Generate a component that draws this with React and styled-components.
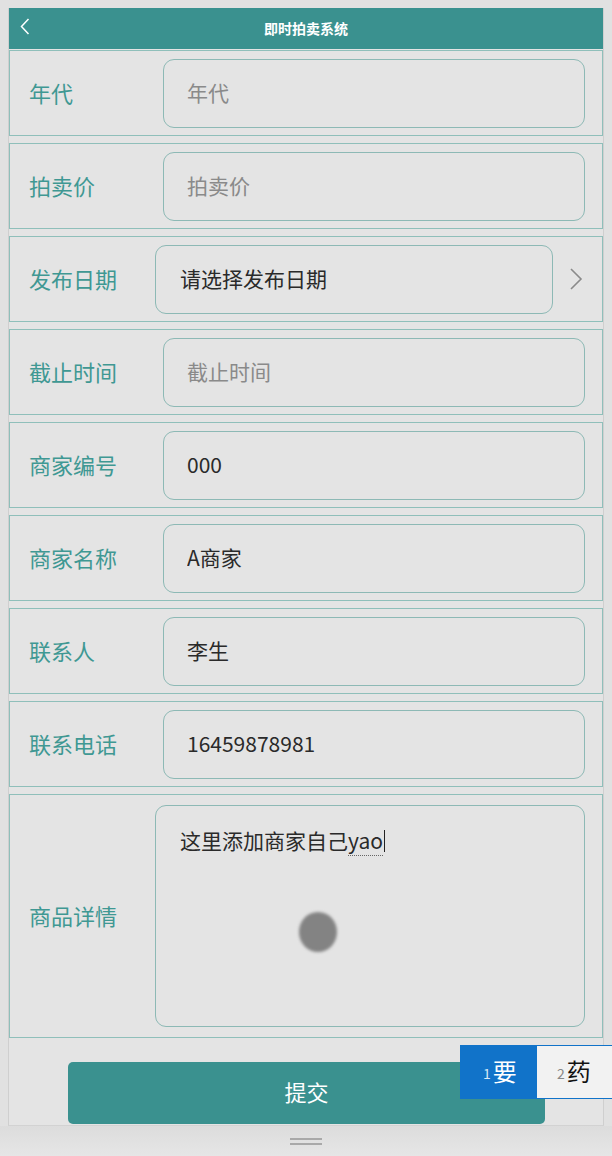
import React from 'react';
import styled, { createGlobalStyle } from 'styled-components';

const GlobalStyle = createGlobalStyle`
    body {
        margin: 0;
        background: #e1e1e1;
        font-family: "Noto Sans CJK SC", "Noto Sans", sans-serif;
    }
`;

const fields = [
    { label: '年代', placeholder: '年代' },
    { label: '拍卖价', placeholder: '拍卖价' },
    { label: '发布日期', picker: '请选择发布日期' },
    { label: '截止时间', placeholder: '截止时间' },
    { label: '商家编号', value: '000' },
    { label: '商家名称', value: 'A商家' },
    { label: '联系人', value: '李生' },
    { label: '联系电话', value: '16459878981' },
];

const App = () => {
    return (
        <Page>
            <GlobalStyle />
            <Frame>
                <Header>
                    <BackBtn>
                        <svg width="10" height="17" viewBox="0 0 10 17">
                            <path d="M8.5 1 L1.5 8.5 L8.5 16" fill="none" stroke="#fff" strokeWidth="1.5" />
                        </svg>
                    </BackBtn>
                    <Title>即时拍卖系统</Title>
                    <span />
                </Header>

                <Form>
                    {fields.map((f) => (
                        <Row key={f.label}>
                            <Label $narrow={!!f.picker}>{f.label}</Label>
                            {f.picker ? (
                                <>
                                    <Picker>{f.picker}</Picker>
                                    <Arrow>
                                        <svg width="14" height="24" viewBox="0 0 14 24">
                                            <path d="M2 2 L12 12 L2 22" fill="none" stroke="#8a8a8a" strokeWidth="1.6" />
                                        </svg>
                                    </Arrow>
                                </>
                            ) : (
                                <Field readOnly placeholder={f.placeholder} defaultValue={f.value || ''} />
                            )}
                        </Row>
                    ))}

                    <Row $tall>
                        <Label $narrow>商品详情</Label>
                        <TextArea>
                            这里添加商家自己<Composing>yao</Composing><Caret />
                            <TouchDot />
                        </TextArea>
                    </Row>
                </Form>

                <Footer>
                    <SubmitBtn>提交</SubmitBtn>
                </Footer>
            </Frame>

            <BottomBar>
                <Handle />
            </BottomBar>

            <Candidates>
                <Candidate $active><small>1</small>要</Candidate>
                <Candidate><small>2</small>药</Candidate>
            </Candidates>
        </Page>
    );
};

const Page = styled.div`
    position: relative;
    width: 612px;
    height: 1156px;
    padding-top: 8px;
    box-sizing: border-box;
    overflow: hidden;
`;

const Frame = styled.div`
    margin: 0 8px;
    border-left: 1px solid #cfcfcf;
    border-right: 1px solid #cfcfcf;
    border-bottom: 1px solid #d2d2d2;
    background: #e4e4e4;
`;

const Header = styled.div`
    height: 41px;
    background: #3a918f;
    display: grid;
    grid-template-columns: 40px 1fr 40px;
    align-items: center;
`;

const BackBtn = styled.div`
    display: flex;
    align-items: center;
    padding-left: 11px;
    padding-bottom: 4px;
`;

const Title = styled.div`
    text-align: center;
    color: #fff;
    font-size: 14px;
    font-weight: bold;
    padding-bottom: 2px;
`;

const Form = styled.div`
    padding-top: 1px;
`;

const Row = styled.div`
    display: flex;
    align-items: center;
    box-sizing: border-box;
    height: ${(props) => (props.$tall ? '244px' : '86px')};
    margin-bottom: ${(props) => (props.$tall ? '0' : '7px')};
    padding: 0 17px 0 19px;
    border: 1px solid #8fbfba;
    background: #e4e4e4;
`;

const Label = styled.div`
    flex: 0 0 ${(props) => (props.$narrow ? '126px' : '134px')};
    color: #3f9893;
    font-size: 22px;
    padding-bottom: 2px;
`;

const Field = styled.input`
    flex: 1;
    min-width: 0;
    height: 69px;
    box-sizing: border-box;
    border: 1px solid #8db9b5;
    border-radius: 11px;
    background: transparent;
    padding: 0 0 3px 23px;
    font-family: inherit;
    font-size: 21px;
    color: #2a2a2a;
    outline: none;

    &::placeholder {
        color: #8a8a8a;
    }
`;

const Picker = styled.div`
    flex: 0 0 398px;
    height: 69px;
    box-sizing: border-box;
    border: 1px solid #8db9b5;
    border-radius: 11px;
    padding: 0 0 3px 24px;
    display: flex;
    align-items: center;
    font-size: 21px;
    color: #2a2a2a;
`;

const Arrow = styled.div`
    flex: 1;
    display: flex;
    justify-content: center;
    padding-left: 14px;
`;

const TextArea = styled.div`
    position: relative;
    flex: 1;
    height: 222px;
    box-sizing: border-box;
    border: 1px solid #8db9b5;
    border-radius: 11px;
    padding: 19px 0 0 24px;
    font-size: 21px;
    line-height: 30px;
    color: #2a2a2a;
`;

const Composing = styled.span`
    border-bottom: 1px dotted #666;
`;

const Caret = styled.span`
    display: inline-block;
    width: 1px;
    height: 22px;
    margin-left: 1px;
    vertical-align: -3px;
    background: #222;
`;

const TouchDot = styled.span`
    position: absolute;
    left: 143px;
    top: 106px;
    width: 38px;
    height: 40px;
    border-radius: 50%;
    background: #838383;
    filter: blur(1.5px);
`;

const Footer = styled.div`
    height: 87px;
    padding: 24px 0 0 59px;
    box-sizing: border-box;
`;

const SubmitBtn = styled.button`
    width: 477px;
    height: 62px;
    border: none;
    border-radius: 5px;
    background: #3a918f;
    color: #fff;
    font-family: inherit;
    font-size: 22px;
    padding-bottom: 6px;
`;

const BottomBar = styled.div`
    height: 30px;
    display: flex;
    justify-content: center;
    align-items: center;
    background: linear-gradient(#dcdcdc, #e6e6e6);
`;

const Handle = styled.div`
    width: 32px;
    height: 7px;
    border-top: 2px solid #a9a9a9;
    border-bottom: 2px solid #a9a9a9;
    box-sizing: border-box;
`;

const Candidates = styled.div`
    position: absolute;
    left: 460px;
    top: 1045px;
    display: flex;
    height: 54px;
`;

const Candidate = styled.div`
    display: flex;
    align-items: center;
    box-sizing: border-box;
    height: 54px;
    padding-left: ${(props) => (props.$active ? '23px' : '20px')};
    padding-bottom: 4px;
    width: ${(props) => (props.$active ? '77px' : '90px')};
    background: ${(props) => (props.$active ? '#1173c9' : '#f2f2f2')};
    border-top: 1px solid #1173c9;
    border-bottom: 1px solid #1173c9;
    color: ${(props) => (props.$active ? '#fff' : '#111')};
    font-size: 24px;

    & small {
        font-size: 14px;
        margin-right: 2px;
        margin-top: 6px;
        color: ${(props) => (props.$active ? '#d8e8f6' : '#888')};
    }
`;

export default App;
